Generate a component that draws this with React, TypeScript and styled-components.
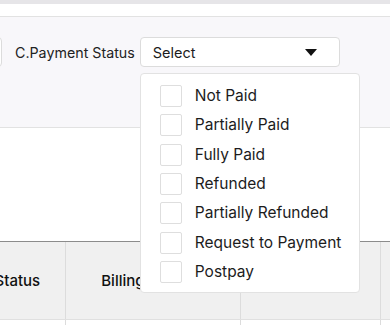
import React from "react";
import styled, { createGlobalStyle } from "styled-components";

const GlobalStyle = createGlobalStyle`
  html, body {
    margin: 0;
    padding: 0;
    background: #ffffff;
    font-family: Inter, "Noto Sans", sans-serif;
    color: #1c1c1c;
    overflow: hidden;
  }
`;

const Page = styled.div`
  width: 390px;
  height: 325px;
  overflow: hidden;
  display: flex;
  flex-direction: column;
`;

const TopStrip = styled.div`
  height: 4px;
  background: #e6e5e8;
  flex-shrink: 0;
`;

const WhiteBar = styled.div`
  height: 12px;
  background: #ffffff;
  border-bottom: 1px solid #e2e2e2;
  flex-shrink: 0;
`;

const FilterPanel = styled.div`
  height: 111px;
  background: #f8f7fa;
  border-bottom: 1px solid #e2e2e2;
  padding-top: 20px;
  box-sizing: border-box;
  flex-shrink: 0;
`;

const FilterRow = styled.div`
  display: flex;
  align-items: center;
  margin-left: -98px;
`;

const PrevInput = styled.div`
  width: 100px;
  height: 30px;
  box-sizing: border-box;
  background: #ffffff;
  border: 1px solid #dcdcdc;
  border-radius: 4px;
  margin-right: 13px;
`;

const Label = styled.span`
  font-size: 14.25px;
  color: #222;
  white-space: nowrap;
  margin-right: 5px;
`;

const SelectWrap = styled.div`
  position: relative;
`;

const SelectBox = styled.div`
  width: 200px;
  height: 30px;
  box-sizing: border-box;
  background: #ffffff;
  border: 1px solid #dcdcdc;
  border-radius: 4px;
  display: flex;
  align-items: center;
  justify-content: space-between;
  padding: 0 22px 0 12px;
  font-size: 14.5px;
  color: #1c1c1c;
`;

const Caret = styled.span`
  width: 0;
  height: 0;
  border-left: 6px solid transparent;
  border-right: 6px solid transparent;
  border-top: 7px solid #111;
`;

const Menu = styled.div`
  position: absolute;
  top: 36px;
  left: 0;
  width: 220px;
  height: 220px;
  box-sizing: border-box;
  background: #ffffff;
  border: 1px solid #e2e2e2;
  border-radius: 4px;
  padding: 11px 0 0 19px;
  display: flex;
  flex-direction: column;
  gap: 7.33px;
  z-index: 5;
`;

const Option = styled.label`
  display: flex;
  align-items: center;
  gap: 13px;
  font-size: 15.5px;
  line-height: 22px;
  color: #1c1c1c;
  white-space: nowrap;
`;

const Check = styled.span`
  width: 22px;
  height: 22px;
  box-sizing: border-box;
  border: 1px solid #dedede;
  border-radius: 2px;
  background: #fff;
  flex-shrink: 0;
`;

const Blank = styled.div`
  height: 113px;
  background: #ffffff;
  border-bottom: 1px solid #8c8c8c;
  flex-shrink: 0;
`;

const Table = styled.div`
  margin-left: -97px;
  display: flex;
  flex-direction: column;
`;

const Row = styled.div<{ $head?: boolean }>`
  display: flex;
  height: ${(p) => (p.$head ? "77px" : "40px")};
  background: ${(p) => (p.$head ? "#f0f0f0" : "#ffffff")};
  border-bottom: 1px solid #e0e0e0;
`;

const Cell = styled.div<{ $w: number }>`
  width: ${(p) => p.$w}px;
  flex-shrink: 0;
  box-sizing: border-box;
  border-right: 1px solid #dcdcdc;
  display: flex;
  align-items: center;
  justify-content: center;
  font-size: 15px;
  font-weight: 500;
  color: #111;
  white-space: nowrap;
`;

const options = [
  "Not Paid",
  "Partially Paid",
  "Fully Paid",
  "Refunded",
  "Partially Refunded",
  "Request to Payment",
  "Postpay",
];

const cols = [
  { w: 163, label: "Payment Status" },
  { w: 175, label: "Billing Amount" },
  { w: 140, label: "Amount" },
  { w: 120, label: "" },
];

export default function App() {
  return (
    <Page>
      <GlobalStyle />
      <TopStrip />
      <WhiteBar />
      <FilterPanel>
        <FilterRow>
          <PrevInput />
          <Label>C.Payment Status</Label>
          <SelectWrap>
            <SelectBox>
              <span>Select</span>
              <Caret />
            </SelectBox>
            <Menu>
              {options.map((o) => (
                <Option key={o}>
                  <Check />
                  {o}
                </Option>
              ))}
            </Menu>
          </SelectWrap>
        </FilterRow>
      </FilterPanel>
      <Blank />
      <Table>
        <Row $head>
          {cols.map((c, i) => (
            <Cell key={i} $w={c.w}>
              {c.label}
            </Cell>
          ))}
        </Row>
        <Row>
          {cols.map((c, i) => (
            <Cell key={i} $w={c.w} />
          ))}
        </Row>
      </Table>
    </Page>
  );
}
